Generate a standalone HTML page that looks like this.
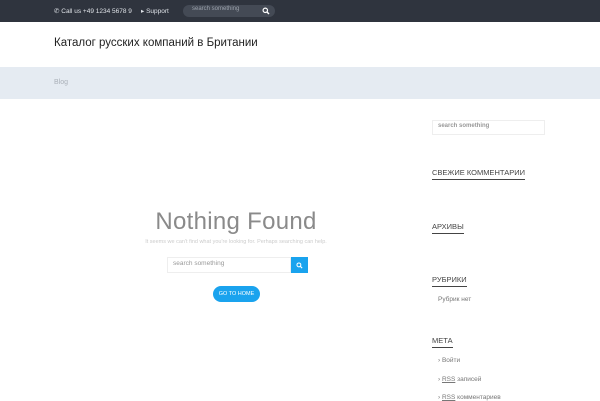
<!DOCTYPE html>
<html><head><meta charset="utf-8"><style>
*{margin:0;padding:0;box-sizing:border-box}
body{width:600px;height:400px;overflow:hidden;background:#fff;font-family:"Liberation Sans",sans-serif;position:relative}
.a{position:absolute}
.top{left:0;top:0;width:600px;height:22px;background:#2f343e}
.t{color:#dfe3e8;font-size:6.5px}
.h{font-size:7.5px;color:#444;border-bottom:1.5px solid #444;padding-bottom:2px;left:432px}
.li{font-size:6.5px;color:#777;left:438px}
</style></head><body>
<div class="a top"></div>
<div class="a t" style="left:54px;top:7px">&#9990; Call us +49 1234 5678 9</div>
<div class="a t" style="left:141px;top:7px">&#9656; Support</div>
<div class="a" style="left:183px;top:5px;width:92px;height:12px;border-radius:6px;background:#444a55"></div>
<div class="a" style="left:192px;top:6px;font-size:6px;color:#9aa0aa">search something</div>
<svg class="a" style="left:262px;top:7px" width="8" height="8" viewBox="0 0 8 8"><circle cx="3.3" cy="3.3" r="2.2" fill="none" stroke="#fff" stroke-width="1.2"/><line x1="5" y1="5" x2="7" y2="7" stroke="#fff" stroke-width="1.4"/></svg>
<div class="a" style="left:54px;top:37px;font-size:11.5px;color:#222">Каталог русских компаний в Британии</div>
<div class="a" style="left:0;top:67px;width:600px;height:32px;background:#e5ebf2"></div>
<div class="a" style="left:54px;top:79px;font-size:7px;color:#aab0b8">Blog</div>
<div class="a" style="left:120px;top:208px;width:232px;text-align:center;font-size:24px;color:#8a8a8a;letter-spacing:0.3px">Nothing Found</div>
<div class="a" style="left:120px;top:239px;width:232px;text-align:center;font-size:5.5px;color:#ccc">It seems we can't find what you're looking for. Perhaps searching can help.</div>
<div class="a" style="left:167px;top:257px;width:124px;height:16px;border:1px solid #eee"></div>
<div class="a" style="left:173px;top:260px;font-size:6.5px;color:#999">search something</div>
<div class="a" style="left:291px;top:257px;width:17px;height:16px;background:#1aa3ee"></div>
<svg class="a" style="left:296px;top:262px" width="7" height="7" viewBox="0 0 8 8"><circle cx="3.3" cy="3.3" r="2.2" fill="none" stroke="#fff" stroke-width="1.2"/><line x1="5" y1="5" x2="7" y2="7" stroke="#fff" stroke-width="1.4"/></svg>
<div class="a" style="left:213px;top:286px;width:47px;height:16px;border-radius:8px;background:#1aa3ee;color:#fff;font-size:5.5px;text-align:center;line-height:16px">GO TO HOME</div>
<div class="a" style="left:432px;top:120px;width:113px;height:15px;border:1px solid #eee"></div>
<div class="a" style="left:438px;top:123px;font-size:6px;color:#999;font-weight:bold">search something</div>
<div class="a h" style="top:168px">СВЕЖИЕ КОММЕНТАРИИ</div>
<div class="a h" style="top:222px">АРХИВЫ</div>
<div class="a h" style="top:275px">РУБРИКИ</div>
<div class="a li" style="top:296px">Рубрик нет</div>
<div class="a h" style="top:336px">МЕТА</div>
<div class="a li" style="top:357px">› Войти</div>
<div class="a li" style="top:376px">› <u>RSS</u> записей</div>
<div class="a li" style="top:394px">› <u>RSS</u> комментариев</div>
</body></html>
